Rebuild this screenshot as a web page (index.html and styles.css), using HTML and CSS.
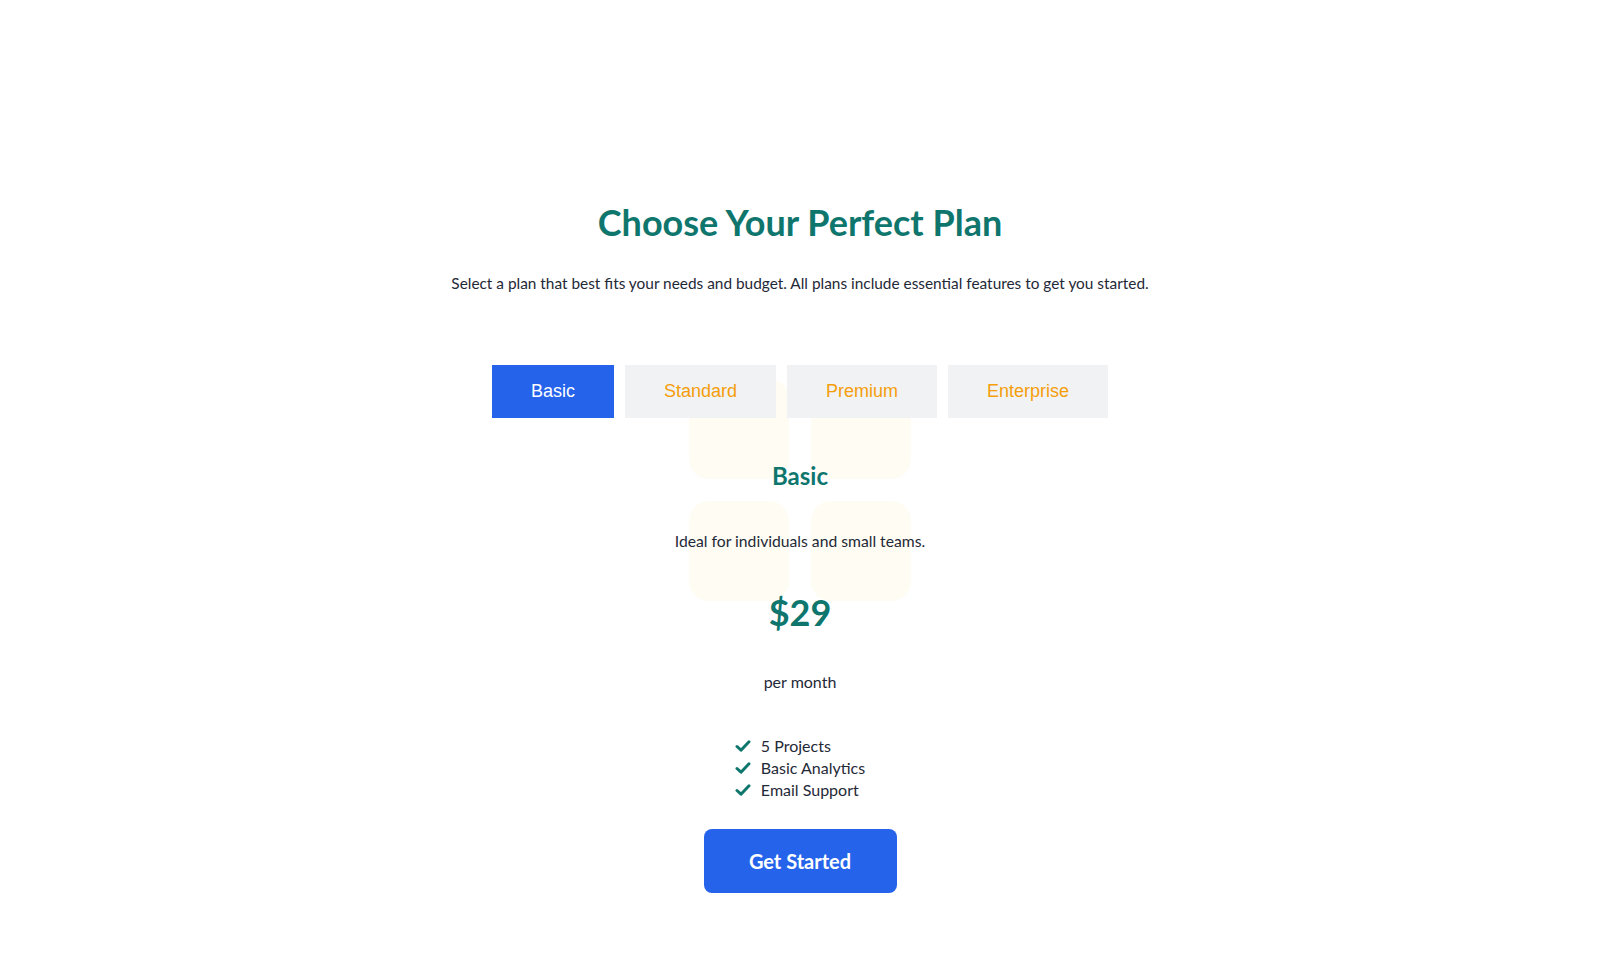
FILE: index.html
```html
<!doctype html>
<html lang="en">
<head>
    <meta charset="UTF-8">
    <meta name="viewport" content="width=device-width, initial-scale=1.0">
    <title>Choose Your Perfect Plan</title>
    <link rel="stylesheet" href="styles.css">
</head>
<body>
    <div class="wrapper">
        <h1 class="title">Choose Your Perfect Plan</h1>
        <p class="subtitle">Select a plan that best fits your needs and budget. All plans include essential features to get you started.</p>

        <div class="tabs">
            <button class="tab active">Basic</button>
            <button class="tab">Standard</button>
            <button class="tab">Premium</button>
            <button class="tab">Enterprise</button>
        </div>

        <div class="plan">
            <div class="decor">
                <span></span><span></span><span></span><span></span>
            </div>
            <h3 class="plan-name">Basic</h3>
            <p class="plan-desc">Ideal for individuals and small teams.</p>
            <div class="price">$29</div>
            <p class="period">per month</p>
            <ul class="features">
                <li><svg class="check" viewBox="0 0 16 14"><polyline points="2,7.5 6,11.2 14,2.8"/></svg>5 Projects</li>
                <li><svg class="check" viewBox="0 0 16 14"><polyline points="2,7.5 6,11.2 14,2.8"/></svg>Basic Analytics</li>
                <li><svg class="check" viewBox="0 0 16 14"><polyline points="2,7.5 6,11.2 14,2.8"/></svg>Email Support</li>
            </ul>
            <button class="cta">Get Started</button>
        </div>
    </div>
</body>
</html>
```

FILE: styles.css
```css
body {
    margin: 0;
    background: #fff;
    font-family: "Lato", "Open Sans", sans-serif;
    color: #1f2937;
}
.wrapper {
    max-width: 1100px;
    margin: 0 auto;
    padding-top: 201px;
    text-align: center;
}
.title {
    margin: 0;
    font-size: 36px;
    line-height: 43px;
    font-weight: 700;
    color: #0f766e;
}
.subtitle {
    margin: 27px 0 0;
    font-size: 15.4px;
    line-height: 24px;
}
.tabs {
    display: flex;
    justify-content: center;
    gap: 11px;
    margin-top: 70px;
}
.tab {
    background: #f1f2f4;
    border: none;
    padding: 16px 39px;
    font-family: "Liberation Sans", Arial, sans-serif;
    font-size: 18px;
    line-height: 21px;
    color: #f59e0b;
    cursor: pointer;
}
.tab.active {
    background: #2563eb;
    color: #fff;
}
.plan {
    position: relative;
    padding-top: 43px;
}
.decor {
    position: absolute;
    top: -39px;
    left: 50%;
    margin-left: -111px;
    display: grid;
    grid-template-columns: 100px 100px;
    gap: 22px;
    z-index: -1;
}
.decor span {
    width: 100px;
    height: 100px;
    border-radius: 20px;
    background: #fefcf3;
}
.plan-name {
    margin: 0;
    font-size: 24px;
    line-height: 30px;
    font-weight: 700;
    color: #0f766e;
}
.plan-desc {
    margin: 38px 0 0;
    font-size: 15.7px;
    line-height: 24px;
}
.price {
    margin-top: 37px;
    font-size: 36px;
    line-height: 44px;
    font-weight: 700;
    color: #0f766e;
}
.period {
    margin: 36px 0 0;
    font-size: 16px;
    line-height: 24px;
}
.features {
    display: inline-block;
    list-style: none;
    margin: 41px 0 0;
    padding: 0;
    text-align: left;
    font-size: 16px;
    line-height: 22px;
}
.features li {
    display: flex;
    align-items: center;
}
.check {
    width: 16px;
    height: 14px;
    fill: none;
    stroke: #0f766e;
    stroke-width: 3;
    stroke-linecap: round;
    stroke-linejoin: round;
    margin-right: 10px;
}
.cta {
    display: block;
    margin: 28px auto 0;
    width: 193px;
    height: 64px;
    border: none;
    border-radius: 8px;
    background: #2563eb;
    color: #fff;
    font-family: "Lato", "Open Sans", sans-serif;
    font-size: 20px;
    font-weight: 700;
    cursor: pointer;
}
```
